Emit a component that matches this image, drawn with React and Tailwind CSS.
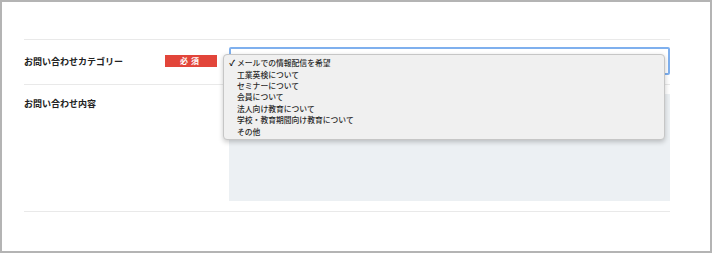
import React from "react";

const options = [
  "メールでの情報配信を希望",
  "工業英検について",
  "セミナーについて",
  "会員について",
  "法人向け教育について",
  "学校・教育期間向け教育について",
  "その他",
];

export default function App() {
  return (
    <div className="relative w-[712px] h-[253px] border-2 border-[#b4b4b4] bg-white box-border font-['Noto_Sans_CJK_JP','Noto_Sans',sans-serif] text-[#222]">
      <div className="pl-[22px] pr-[40px] pt-[37px]">
        <div className="border-t border-[#e9e9e9] flex h-[45px]">
          <div className="w-[141px] pt-[16px] text-[9px] font-bold leading-[12px]">お問い合わせカテゴリー</div>
          <div className="w-[64px] pt-[15px]">
            <div className="w-[52px] h-[12px] bg-[#e2453a] text-white text-[8px] font-bold leading-[12px] text-center tracking-[3px]">必須</div>
          </div>
          <div className="flex-1 pt-[7px]">
            <div className="h-[28px] border-2 border-[#7fb0ee] rounded-[2px] bg-white" />
          </div>
        </div>
        <div className="border-t border-[#e9e9e9] flex pt-[9px] pb-[10px]">
          <div className="w-[205px] pt-[4px] text-[9px] font-bold leading-[12px]">お問い合わせ内容</div>
          <div className="flex-1 h-[107px] bg-[#ecf0f3]" />
        </div>
        <div className="border-t border-[#e9e9e9]" />
      </div>

      <div className="absolute left-[221px] top-[52px] w-[442px] h-[86px] bg-[#f0f0f0] border border-[#c6c6c6] rounded-[4px] shadow-[0_2px_5px_rgba(0,0,0,0.22)] pt-[2px]">
        {options.map((o, i) => (
          <div key={o} className="flex items-center h-[11.4px] text-[7.8px] leading-[11px] text-[#2a2a2a] font-medium">
            <span className="w-[13px] shrink-0 text-right text-[8px] font-bold text-[#111] pr-[2px]">{i === 0 ? "✓" : ""}</span>
            <span>{o}</span>
          </div>
        ))}
      </div>
    </div>
  );
}
